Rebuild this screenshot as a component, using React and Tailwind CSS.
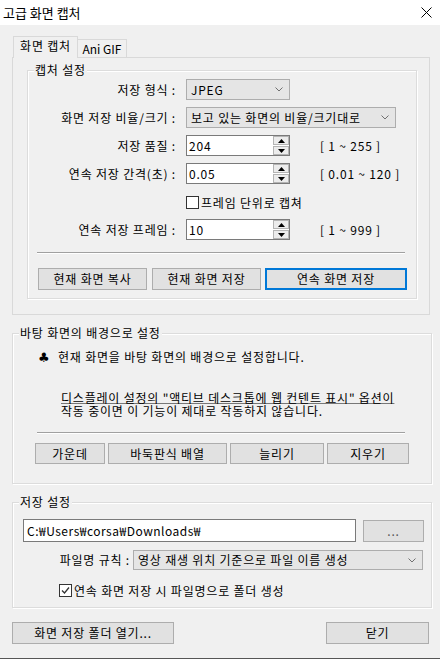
import React from "react";

function Group({ label, className = "", children }) {
  return (
    <div className={`relative border border-[#dcdcdc] shadow-[inset_1px_1px_0_#ffffff,1px_1px_0_#ffffff] ${className}`}>
      <span className="absolute left-[6px] -top-[8px] px-[1px] bg-[#f0f0f0] leading-[14px] whitespace-nowrap">{label}</span>
      {children}
    </div>
  );
}

function Btn({ children, className = "", focused = false }) {
  return (
    <button
      className={`h-[22px] flex items-center justify-center bg-[#e1e1e1] whitespace-nowrap leading-none ${
        focused ? "border-2 border-[#0078d7]" : "border border-[#adadad]"
      } ${className}`}
    >
      {children}
    </button>
  );
}

function Chevron() {
  return (
    <svg width="8" height="5" viewBox="0 0 8 5" className="shrink-0">
      <polyline points="0.5,0.5 4,4 7.5,0.5" fill="none" stroke="#707070" strokeWidth="1" />
    </svg>
  );
}

function Combo({ text, className = "" }) {
  return (
    <div className={`h-[21px] border border-[#adadad] bg-[#e5e5e5] flex items-center justify-between pl-[4px] pr-[6px] leading-none ${className}`}>
      <span className="whitespace-nowrap">{text}</span>
      <Chevron />
    </div>
  );
}

function Spin({ value }) {
  return (
    <div className="w-[104px] h-[21px] border border-[#7a7a7a] bg-white flex items-stretch leading-none">
      <div className="flex-1 flex items-center pl-[2px]">{value}</div>
      <div className="w-[16px] flex flex-col gap-[1px]">
        <div className="flex-1 border border-[#b4b4b4] bg-[#ececec] flex items-center justify-center">
          <svg width="7" height="4" viewBox="0 0 7 4"><polygon points="3.5,0 7,4 0,4" fill="#000" /></svg>
        </div>
        <div className="flex-1 border border-[#b4b4b4] bg-[#ececec] flex items-center justify-center">
          <svg width="7" height="4" viewBox="0 0 7 4"><polygon points="0,0 7,0 3.5,4" fill="#000" /></svg>
        </div>
      </div>
    </div>
  );
}

function CheckBox({ checked }) {
  return (
    <div className="w-[13px] h-[13px] border border-[#333333] bg-white flex items-center justify-center shrink-0">
      {checked && (
        <svg width="9" height="9" viewBox="0 0 9 9">
          <polyline points="1,4.5 3.5,7 8,1.5" fill="none" stroke="#333333" strokeWidth="1.3" />
        </svg>
      )}
    </div>
  );
}

function Row({ label, children, className = "" }) {
  return (
    <div className={`flex items-center h-[21px] ${className}`}>
      <div className="w-[148px] text-right whitespace-nowrap">{label}</div>
      <div className="ml-[10px] flex items-center">{children}</div>
    </div>
  );
}

function Sep({ className = "" }) {
  return <div className={`h-[2px] w-[368px] border-t border-[#a0a0a0] border-b border-b-white ${className}`} />;
}

export default function App() {
  return (
    <div className="w-[440px] h-[659px] bg-[#f0f0f0] text-[12px] tracking-[0.8px] text-black font-['Noto_Sans_CJK_KR','Noto_Sans',sans-serif] flex flex-col overflow-hidden border-b border-[#555555]">
      {/* title bar */}
      <div className="h-[25px] bg-white flex items-center justify-between pl-[3px] pr-[8px] shrink-0">
        <span className="text-[13px] leading-none tracking-normal">고급 화면 캡처</span>
        <svg width="11" height="11" viewBox="0 0 11 11">
          <path d="M0.5 0.5L10.5 10.5M10.5 0.5L0.5 10.5" stroke="#000" strokeWidth="1" />
        </svg>
      </div>

      <div className="flex flex-col pl-[12px] pr-[8px]">
        {/* tabs */}
        <div className="flex items-end h-[22px] mt-[11px] pl-[1px] relative z-10">
          <div className="h-[22px] w-[65px] border border-b-0 border-[#d9d9d9] bg-[#f0f0f0] flex items-center justify-center pb-[4px] leading-none whitespace-nowrap">
            화면 캡처
          </div>
          <div className="h-[18px] w-[49px] mb-[1px] border border-l-0 border-b-0 border-[#d9d9d9] bg-[#f0f0f0] flex items-center justify-center leading-none whitespace-nowrap tracking-normal">
            Ani GIF
          </div>
        </div>

        {/* tab panel */}
        <div className="-mt-[1px] w-[418px] h-[258px] border border-[#d9d9d9] pl-[14px] pt-[12px]">
          <Group label="캡처 설정" className="w-[390px] h-[229px]">
            <div className="flex flex-col">
              <Row label="저장 형식 :" className="mt-[8px]">
                <Combo text="JPEG" className="w-[104px]" />
              </Row>
              <Row label="화면 저장 비율/크기 :" className="mt-[7px]">
                <Combo text="보고 있는 화면의 비율/크기대로" className="w-[210px]" />
              </Row>
              <Row label="저장 품질 :" className="mt-[7px]">
                <Spin value="204" />
                <span className="ml-[30px] whitespace-nowrap">[ 1 ~ 255 ]</span>
              </Row>
              <Row label="연속 저장 간격(초) :" className="mt-[7px]">
                <Spin value="0.05" />
                <span className="ml-[30px] whitespace-nowrap">[ 0.01 ~ 120 ]</span>
              </Row>
              <Row label="" className="mt-[8px]">
                <CheckBox checked={false} />
                <span className="ml-[2px] whitespace-nowrap">프레임 단위로 캡쳐</span>
              </Row>
              <Row label="연속 저장 프레임 :" className="mt-[6px]">
                <Spin value="10" />
                <span className="ml-[30px] whitespace-nowrap">[ 1 ~ 999 ]</span>
              </Row>
              <Sep className="ml-[9px] mt-[12px]" />
              <div className="flex ml-[10px] mt-[14px] gap-[5px]">
                <Btn className="w-[109px]">현재 화면 복사</Btn>
                <Btn className="w-[109px]">현재 화면 저장</Btn>
                <Btn className="w-[142px] ml-[-1px]" focused>연속 화면 저장</Btn>
              </div>
            </div>
          </Group>
        </div>

        {/* wallpaper group */}
        <Group label="바탕 화면의 배경으로 설정" className="w-[420px] h-[151px] mt-[18px]">
          <div className="flex flex-col">
            <div className="flex items-center h-[14px] mt-[16px] ml-[25px]">
              <span className="w-[20px] font-['DejaVu_Sans',sans-serif] text-[13px] leading-none">♣</span>
              <span className="whitespace-nowrap">현재 화면을 바탕 화면의 배경으로 설정합니다.</span>
            </div>
            <div className="mt-[27px] ml-[48px] leading-[13px] whitespace-nowrap">
              <span className="underline decoration-[#777777] underline-offset-[0px]">디스플레이 설정의 "액티브 데스크톱에 웹 컨텐트 표시" 옵션이</span>
              <br />
              작동 중이면 이 기능이 제대로 작동하지 않습니다.
            </div>
            <Sep className="ml-[24px] mt-[15px]" />
            <div className="flex ml-[22px] mt-[9px] gap-[3px]">
              <Btn className="w-[70px] !h-[21px]">가운데</Btn>
              <Btn className="w-[119px] !h-[21px]">바둑판식 배열</Btn>
              <Btn className="w-[94px] !h-[21px]">늘리기</Btn>
              <Btn className="w-[82px] !h-[21px]">지우기</Btn>
            </div>
          </div>
        </Group>

        {/* save group */}
        <Group label="저장 설정" className="w-[420px] h-[106px] mt-[18px]">
          <div className="flex flex-col">
            <div className="flex items-center mt-[16px] ml-[10px]">
              <div className="w-[333px] h-[23px] border border-[#7a7a7a] bg-white flex items-center pl-[3px] leading-none whitespace-nowrap tracking-[0.5px]">
                C:₩Users₩corsa₩Downloads₩
              </div>
              <Btn className="w-[61px] ml-[7px] text-[#555555]">...</Btn>
            </div>
            <div className="flex items-center mt-[8px]">
              <div className="w-[117px] text-right whitespace-nowrap">파일명 규칙 :</div>
              <Combo text="영상 재생 위치 기준으로 파일 이름 생성" className="w-[290px] ml-[3px] !h-[20px]" />
            </div>
            <div className="flex items-center mt-[14px] ml-[46px] h-[13px]">
              <CheckBox checked />
              <span className="ml-[2px] whitespace-nowrap">연속 화면 저장 시 파일명으로 폴더 생성</span>
            </div>
          </div>
        </Group>

        {/* bottom buttons */}
        <div className="flex justify-between mt-[14px] w-[420px] pr-[3px]">
          <Btn className="w-[162px]">화면 저장 폴더 열기...</Btn>
          <Btn className="w-[103px]">닫기</Btn>
        </div>
      </div>
    </div>
  );
}
